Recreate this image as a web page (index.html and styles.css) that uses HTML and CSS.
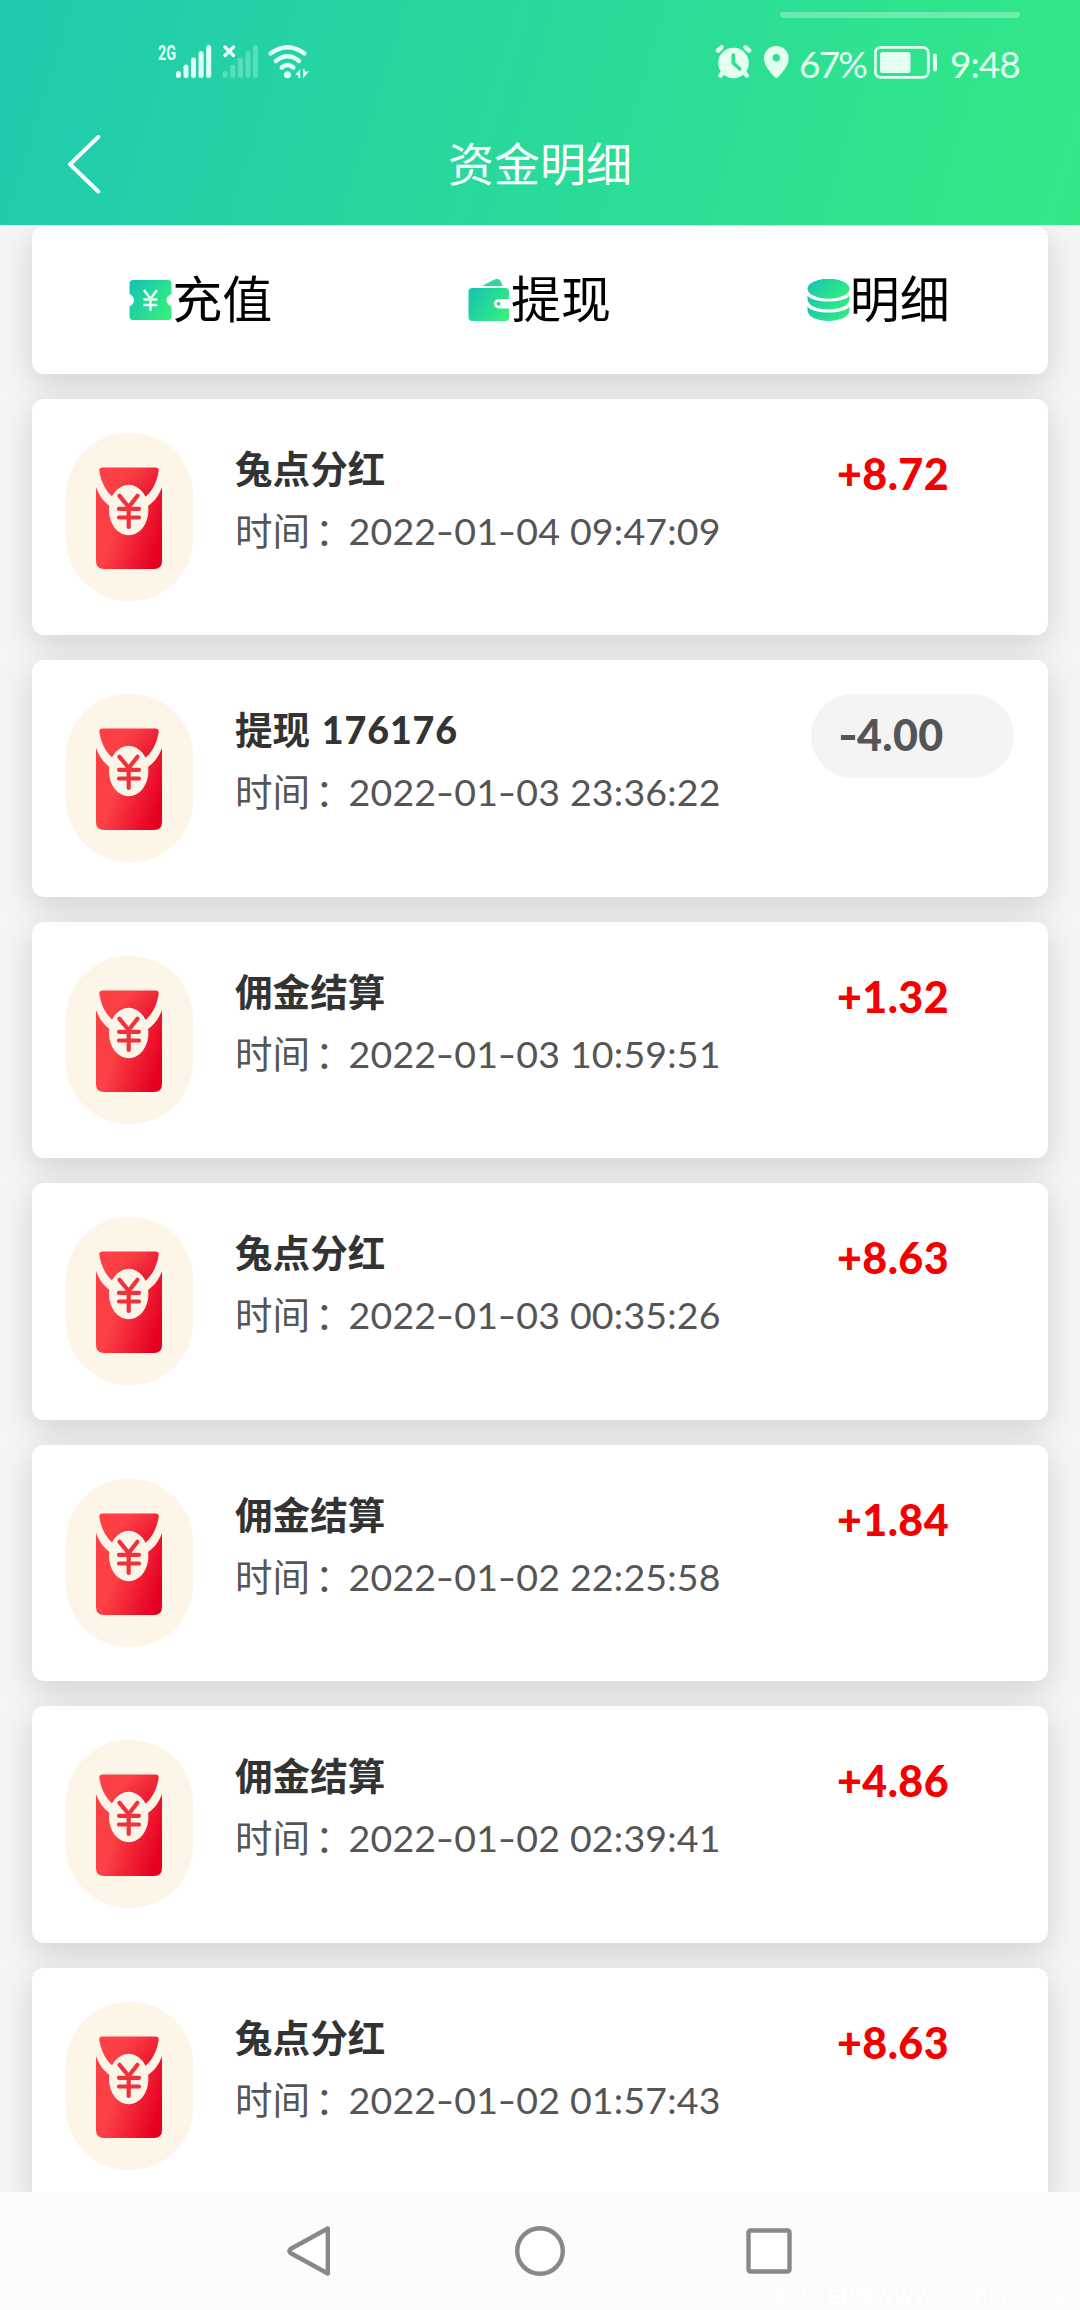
FILE: index.html
```html
<!DOCTYPE html>
<html lang="zh-CN">
<head>
<meta charset="utf-8">
<title>资金明细</title>
<link rel="stylesheet" href="styles.css">
</head>
<body>
<svg class="defs" width="0" height="0" aria-hidden="true">
  <defs>
    <linearGradient id="red" x1="0" y1="0.2" x2="1" y2="0.6">
      <stop offset="0.35" stop-color="#fc4046"/>
      <stop offset="1" stop-color="#e50022"/>
    </linearGradient>
    <linearGradient id="flap" x1="0" y1="0" x2="1" y2="0.5">
      <stop offset="0.45" stop-color="#fc4046"/>
      <stop offset="1" stop-color="#ea1a30"/>
    </linearGradient>
    <linearGradient id="green" x1="0" y1="0.2" x2="1" y2="0.8">
      <stop offset="0" stop-color="#17c5b0"/>
      <stop offset="1" stop-color="#36f07c"/>
    </linearGradient>
    <symbol id="packet" viewBox="0 0 127 168">
      <path fill="url(#red)" d="M30 54C33 62 37 68 43.500 73H82C89 68 93 62 96 54V128Q96 136 88 136H38Q30 136 30 128Z"/>
      <path fill="url(#flap)" d="M36.500 34.600H89.500Q93.300 34.600 92.600 38.500C90.500 50 86 59 78 65H48C40 59 35.500 50 33.400 38.500Q32.700 34.600 36.500 34.600Z"/>
      <ellipse cx="62.700" cy="77" rx="19.700" ry="25.300" fill="#fdf5e8"/>
      <path fill="none" stroke="#ef323c" stroke-width="4.200" stroke-linecap="round" d="M53.500 62.800L62.700 74L71.500 62.800M53 75.800H73M53 84.500H73M62.700 74V94"/>
    </symbol>
  </defs>
</svg>
<div class="screen">
  <header class="header">
    <div class="slot"></div>
    <div class="status">
      <svg class="signals" width="156" height="36" viewBox="154 43 156 36" fill="#e2fff6" stroke-linecap="round">
        <text class="net" x="158" y="60" textLength="18" lengthAdjust="spacingAndGlyphs">2G</text>
        <path stroke="#e2fff6" stroke-width="5" d="M178.400 73.500V75.500M186 67V75.500M193.500 60V75.500M201.100 53.500V75.500M208.700 47.500V75.500"/>
        <path stroke="#e2fff6" stroke-opacity=".28" stroke-width="5" d="M225.200 73.500V75.500M232.800 67V75.500M240.400 60V75.500M248 53.500V75.500M255.500 47.500V75.500"/>
        <path stroke="#e2fff6" stroke-width="3.400" d="M225 47L233.500 55.500M233.500 47L225 55.500"/>
        <g fill="none" stroke="#e2fff6" stroke-width="4.400">
          <path d="M270.600 53.500Q287.500 41 304.400 53.500"/>
          <path d="M276 61Q287.500 51.500 299 61"/>
          <path d="M281.700 67.500Q287.500 62.500 293.300 67.500"/>
        </g>
        <circle cx="287.500" cy="74.700" r="3.500"/>
        <path d="M295 75L300.200 69V78H298.300V75ZM303 69H304.600V71.500H308.800L303 78.500Z"/>
      </svg>
      <div class="status-right">
        <svg width="74" height="36" viewBox="715 43 74 36" fill="#e2fff0">
          <circle cx="733.500" cy="63" r="15.300"/>
          <path fill="none" stroke="#e2fff0" stroke-width="4.500" stroke-linecap="round" d="M718 50.500L721.500 47.300M749 50.500L745.500 47.300M723 72L720.500 75.500M744 72L746.700 75.500"/>
          <path fill="none" stroke="#2ee18e" stroke-width="3.600" stroke-linecap="round" stroke-linejoin="round" d="M733.300 55V63L739.800 69"/>
          <path fill-rule="evenodd" d="M776.300 46C769 46 764 51.500 764 58.500C764 66 771 73 774.500 77Q776.300 79 778.200 77C781.700 73 788.700 66 788.700 58.500C788.700 51.500 783.600 46 776.300 46ZM776.300 54A3.700 3.700 0 1 1 776.300 61.400A3.700 3.700 0 1 1 776.300 54Z"/>
        </svg>
        <span class="stat percent">67%</span>
        <svg width="64" height="36" viewBox="874 43 64 36" fill="#e2fff0">
          <rect x="875.300" y="47.300" width="53" height="30" rx="5.500" fill="none" stroke="#e2fff0" stroke-width="2.800"/>
          <rect x="880" y="52" width="30.500" height="21" rx="2.500"/>
          <rect x="933" y="53.500" width="4" height="18" rx="2"/>
        </svg>
        <span class="stat clock">9:48</span>
      </div>
    </div>
    <div class="titlebar">
      <svg class="back" width="34" height="60" viewBox="67 134 34 60" fill="none" stroke="#f2fffc" stroke-width="4" stroke-linecap="round" stroke-linejoin="round"><path d="M98.300 137L70 164.300L98.300 191.500"/></svg>
      <h1>资金明细</h1>
    </div>
  </header>

  <main class="list">
    <nav class="card menu">
      <div class="menu-item">
        <svg width="43" height="44" viewBox="0 0 43 44"><path fill="url(#green)" d="M4 1H39Q42.500 1 42.500 4.500V15Q37.500 17 37.500 21T42.500 27.500V37.500Q42.500 41 39 41H4Q.5 41 .5 37.500V27.500Q5 25 5 21T.5 15V4.500Q.5 1 4 1Z"/><path fill="none" stroke="#eafff6" stroke-width="2.400" d="M15 11L21.500 20L28 11M14.500 20.500H28.500M14.500 26H28.500M21.500 20V32"/></svg>
        <span>充值</span>
      </div>
      <div class="menu-item">
        <svg width="43" height="44" viewBox="0 0 43 44"><path fill="#2bd79c" d="M14 7L26 .7Q31-1.500 33 3L34.500 7Z"/><path fill="url(#green)" fill-rule="evenodd" d="M4.500 9H37.500Q41 9 41 12.500V20H31A5 4.700 0 0 0 31 29.500H41V38Q41 42 37.500 42H4.500Q.5 42 .5 38V13Q.5 9 4.500 9Z"/><circle cx="30.500" cy="24.700" r="2" fill="#2bd997"/></svg>
        <span>提现</span>
      </div>
      <div class="menu-item">
        <svg width="43" height="44" viewBox="0 0 43 44" fill="url(#green)"><ellipse cx="21.500" cy="9.700" rx="21" ry="10"/><path d="M.5 16.500C6 24.500 37 24.500 42.500 16.500V20C42.500 34 .5 34 .5 20Z"/><path d="M.5 27.500C6 35.500 37 35.500 42.500 27.500V31C42.500 45.500 .5 45.500 .5 31Z"/></svg>
        <span>明细</span>
      </div>
    </nav>

    <article class="card record">
      <div class="avatar"><svg width="127" height="168"><use href="#packet"/></svg></div>
      <div class="info"><h2>兔点分红</h2><p>时间<span class="colon">：</span><time>2022<i>-</i>01<i>-</i>04 09:47:09</time></p></div>
      <div class="amount income">+8.72</div>
    </article>
    <article class="card record">
      <div class="avatar"><svg width="127" height="168"><use href="#packet"/></svg></div>
      <div class="info"><h2>提现 <b>176176</b></h2><p>时间<span class="colon">：</span><time>2022<i>-</i>01<i>-</i>03 23:36:22</time></p></div>
      <div class="amount expense"><i>-</i>4.00</div>
    </article>
    <article class="card record">
      <div class="avatar"><svg width="127" height="168"><use href="#packet"/></svg></div>
      <div class="info"><h2>佣金结算</h2><p>时间<span class="colon">：</span><time>2022<i>-</i>01<i>-</i>03 10:59:51</time></p></div>
      <div class="amount income">+1.32</div>
    </article>
    <article class="card record">
      <div class="avatar"><svg width="127" height="168"><use href="#packet"/></svg></div>
      <div class="info"><h2>兔点分红</h2><p>时间<span class="colon">：</span><time>2022<i>-</i>01<i>-</i>03 00:35:26</time></p></div>
      <div class="amount income">+8.63</div>
    </article>
    <article class="card record">
      <div class="avatar"><svg width="127" height="168"><use href="#packet"/></svg></div>
      <div class="info"><h2>佣金结算</h2><p>时间<span class="colon">：</span><time>2022<i>-</i>01<i>-</i>02 22:25:58</time></p></div>
      <div class="amount income">+1.84</div>
    </article>
    <article class="card record">
      <div class="avatar"><svg width="127" height="168"><use href="#packet"/></svg></div>
      <div class="info"><h2>佣金结算</h2><p>时间<span class="colon">：</span><time>2022<i>-</i>01<i>-</i>02 02:39:41</time></p></div>
      <div class="amount income">+4.86</div>
    </article>
    <article class="card record">
      <div class="avatar"><svg width="127" height="168"><use href="#packet"/></svg></div>
      <div class="info"><h2>兔点分红</h2><p>时间<span class="colon">：</span><time>2022<i>-</i>01<i>-</i>02 01:57:43</time></p></div>
      <div class="amount income">+8.63</div>
    </article>
  </main>

  <footer class="navbar">
    <svg width="506" height="52" viewBox="287 2225 506 52" fill="#fff" stroke="#888" stroke-width="4.400" stroke-linejoin="round">
      <path d="M327.800 2228.500V2273.500L290.500 2253Q288.500 2251 290.500 2249Z"/>
      <circle cx="540" cy="2251" r="22.800"/>
      <rect x="748.500" y="2230.500" width="41" height="41" rx="2"/>
    </svg>
    <span class="mark">58好项目网www. 58hxm .com</span>
  </footer>
</div>
</body>
</html>
```
FILE: styles.css
```css
* {
  box-sizing: border-box;
  margin: 0;
  padding: 0;
}

body {
  width: 1080px;
  height: 2310px;
  overflow: hidden;
  font-family: Lato, "Noto Sans CJK SC", sans-serif;
}

i {
  font-style: normal;
}

svg {
  display: block;
  flex: none;
}

.defs {
  position: absolute;
}

.screen {
  display: flex;
  flex-direction: column;
  height: 2310px;
  background: #f5f5f5;
}

.header {
  flex: none;
  height: 225px;
  padding-top: 12px;
  background: linear-gradient(107deg, #1fcaaf 0%, #33e986 100%);
}

.slot {
  width: 240px;
  height: 6px;
  margin-left: 780px;
  border-radius: 3px;
  background: rgba(255, 255, 255, 0.3);
}

.status {
  display: flex;
  justify-content: space-between;
  margin-top: 25px;
  padding: 0 0 0 154px;
  height: 36px;
}

.signals {
  overflow: visible;
}

.net {
  font: 700 20px Roboto, sans-serif;
}

.status-right {
  display: flex;
  width: 365px;
}

.stat {
  color: #e2fff0;
  font-size: 37px;
  line-height: 42px;
  white-space: nowrap;
}

.percent {
  width: 85px;
  padding-left: 10px;
  letter-spacing: -1.8px;
}

.clock {
  margin-left: 12px;
  letter-spacing: -1px;
}

.titlebar {
  display: grid;
  grid-template-columns: 1fr auto 1fr;
  align-items: center;
  height: 90px;
  margin-top: 40px;
  padding-left: 67px;
  padding-right: 67px;
}

.titlebar h1 {
  color: #f7fffd;
  font-size: 46px;
  font-weight: 400;
  line-height: 60px;
}

.list {
  display: flex;
  flex: 1;
  min-height: 0;
  flex-direction: column;
  gap: 25px;
  padding: 0.9px 32px 0;
  overflow: hidden;
}

.card {
  flex: none;
  border-radius: 12px;
  background: #fff;
  box-shadow: 0 9px 33px rgba(0, 0, 0, 0.15);
}

.menu {
  display: grid;
  grid-template-columns: repeat(3, 1fr);
  height: 148px;
}

.menu-item {
  display: flex;
  align-items: center;
  justify-content: center;
  color: #000;
  font-size: 50px;
  line-height: 72px;
}

.menu-item svg {
  margin-top: 2px;
  margin-left: -1px;
}

.menu-item span {
  margin-top: -2px;
}

.record {
  display: flex;
  align-items: flex-start;
  height: 236.5px;
  padding: 34px;
}

.avatar {
  width: 127px;
  height: 168px;
  border-radius: 62px;
  background: #fdf5e8;
}

.info {
  flex: 1;
  margin-left: 42px;
  padding-top: 4px;
  white-space: nowrap;
}

.info h2 {
  color: #333;
  font-size: 37.6px;
  font-weight: 700;
  line-height: 63px;
}

.info b {
  margin-left: 2.5px;
  letter-spacing: 0.9px;
}

.info p {
  color: #555;
  font-size: 37.5px;
  line-height: 62px;
}

.colon {
  margin-left: 5px;
  margin-right: -5px;
}

.info time {
  margin-left: 1px;
  letter-spacing: 0.2px;
}

.info i {
  display: inline-block;
  width: 18px;
  text-align: center;
  transform: scaleX(1.35);
}

.amount {
  width: 203px;
  height: 84px;
  padding-left: 26px;
  border-radius: 42px;
  font-size: 43px;
  font-weight: 900;
  letter-spacing: 0.4px;
  line-height: 81px;
}

.amount i {
  display: inline-block;
  width: 20px;
  transform: translateX(1px) scaleX(1.25);
  transform-origin: left;
}

.income {
  color: #f50000;
}

.expense {
  color: #555;
  background: #f4f4f4;
}

.navbar {
  position: relative;
  display: flex;
  flex: none;
  justify-content: center;
  height: 118px;
  padding-top: 33px;
  background: #fcfcfc;
}

.mark {
  position: absolute;
  right: 0;
  bottom: 2px;
  color: #fff;
  font-size: 25px;
  line-height: 30px;
  white-space: nowrap;
}
```
